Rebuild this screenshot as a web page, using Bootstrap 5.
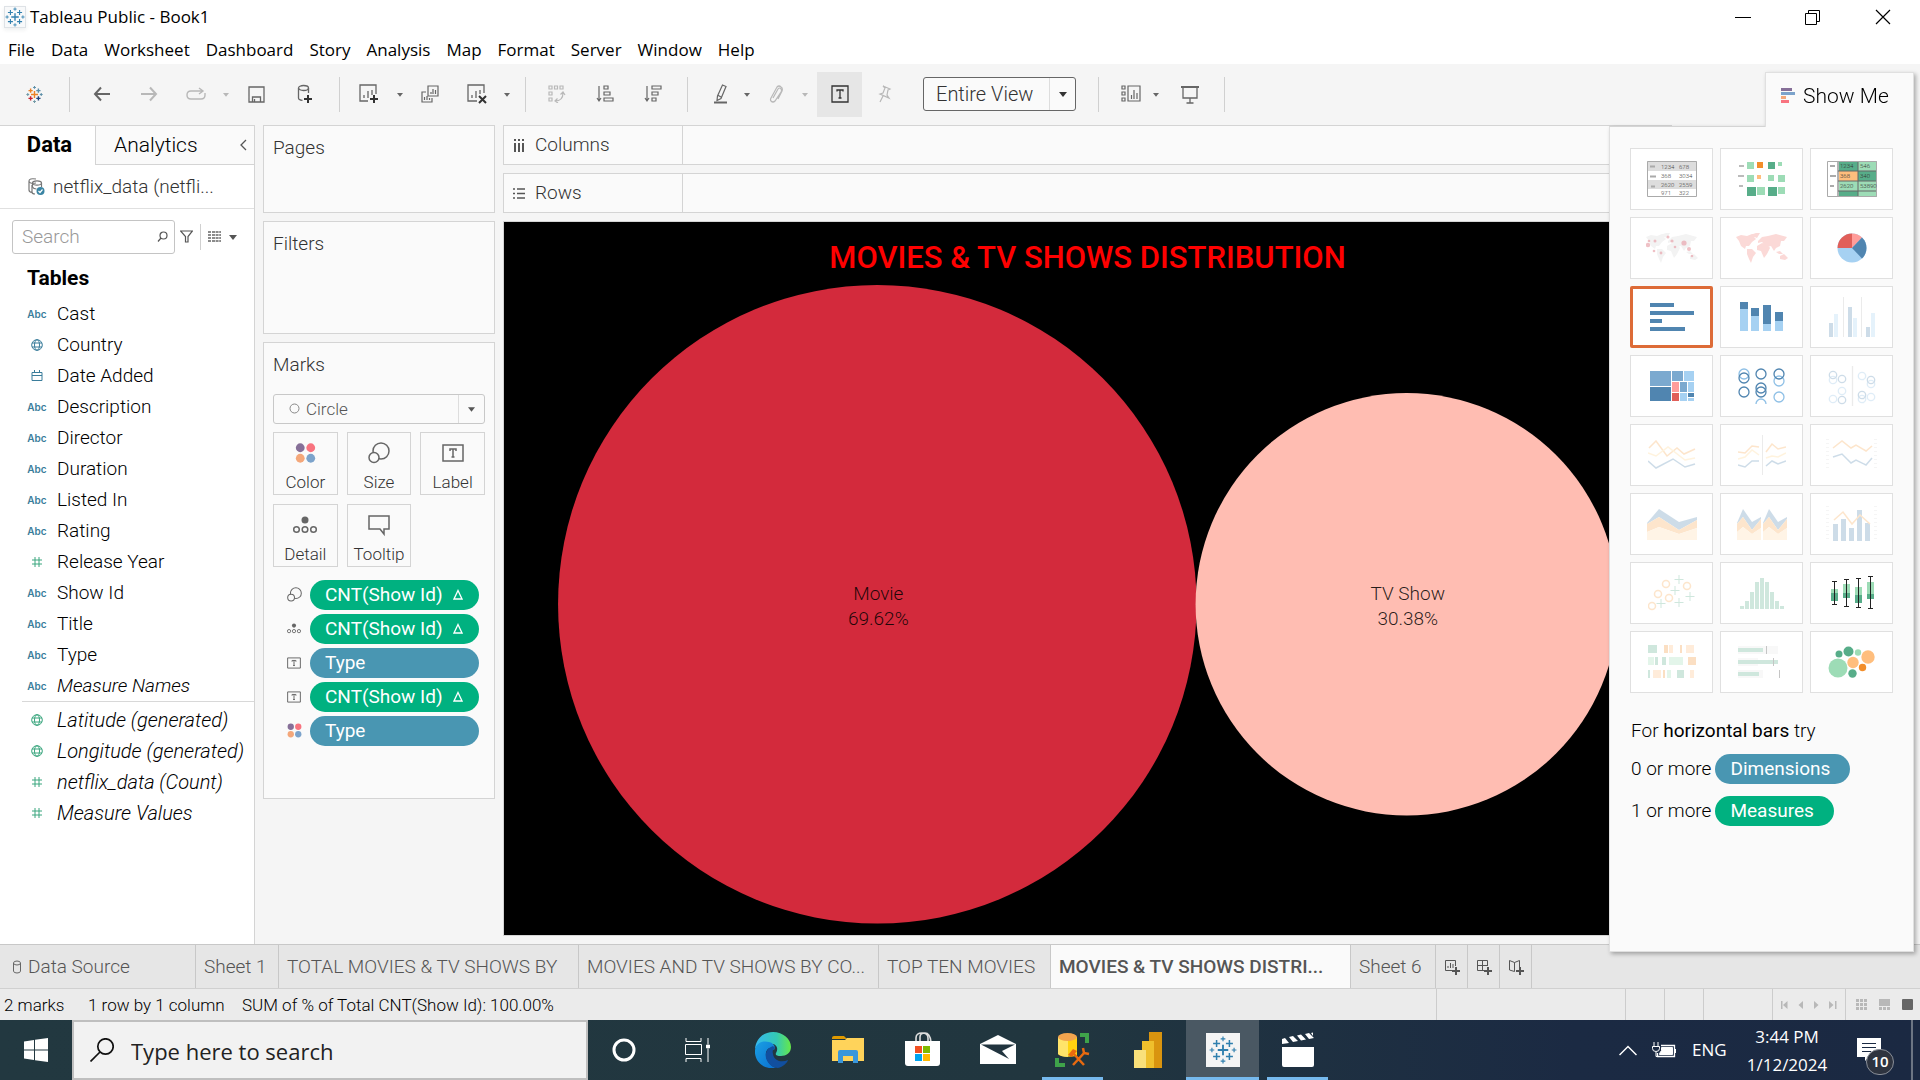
<!DOCTYPE html>
<html lang="en">
<head>
<meta charset="utf-8">
<meta name="viewport" content="width=device-width, initial-scale=1">
<title>Tableau Public - Book1</title>
<link rel="stylesheet" href="https://cdn.jsdelivr.net/npm/bootstrap@5.3.0/dist/css/bootstrap.min.css">
<style>
:root{--line:#d4d4d4;--ink:#333;--pane:#fafafa;--blue:#4996b2;--green:#00b180}
body{font-family:Roboto,"Liberation Sans",sans-serif;font-size:19px;font-weight:300;line-height:24px;color:#000;background:#f5f5f5;overflow:hidden}
svg{display:block;flex:none}
button{font:inherit;color:inherit;background:none;border:0;padding:0}
.win-ui{font-family:"Open Sans","Noto Sans",sans-serif;font-weight:400;font-size:17px}
.app-title{height:35px;padding-right:2px;padding-bottom:1px}
.app-title .wbtn{width:70px;height:34px}
.app-menu{height:29px;gap:16px;padding-left:8px;padding-top:1px}
.app-menu a{color:#000;text-decoration:none}
.tools{height:61px;color:#666}
.tool{height:45px;display:flex;align-items:center;justify-content:center}
.tool.off{color:#b8b8b8}
.tool.on{background:#e6e6e6;color:#333}
.vsep{width:1px;height:35px;background:#d0d0d0}
.drop-box{border:1px solid #666;border-radius:3px;background:var(--pane)}
.drop-box select{appearance:none;border:0;background:none;color:inherit;font:inherit;outline:0;padding:0;height:28px}
.drop-box .arrow{border-left:1px solid #ddd;align-self:stretch;display:flex;align-items:center;justify-content:center}
.side{width:255px;background:#fff;border-right:1px solid var(--line);border-top:1px solid var(--line)}
.side-tabs{height:39px;font-size:21px}
.tab-data{width:95px;font-size:22px;font-weight:700;padding-left:4px}
.tab-ana{background:var(--pane);border-left:1px solid var(--line);border-bottom:1px solid var(--line);padding:0 7px 0 18px}
.src{height:44px;border-bottom:1px solid #e0e0e0;color:var(--ink);padding-top:1px}
.find{width:163px;height:34px;border:1px solid #c4c4c4;border-radius:3px}
.find input{border:0;outline:0;width:110px;height:30px;font:inherit;padding:0;background:none}
.find input::placeholder{color:#999;opacity:1}
.fields{list-style:none;margin:0;padding:0}
.fields li{height:31px;display:flex;align-items:center;padding:1px 0 0 28px;gap:11px;white-space:nowrap}
.fields li>:first-child{width:18px;display:flex;justify-content:center;color:#3a7d9b;flex:none}
.fields .abc{font-size:10px;font-weight:600;font-family:Inter,sans-serif}
.fields .grn>:first-child{color:#3aa67e}
.fields .gen{font-style:italic}
.fields-gen{font-size:20px}
.gen-sep{margin:0 0 2px 22px;height:1px;background:#d8d8d8}
.mid{width:232px}
.pane{background:var(--pane);border:1px solid var(--line);color:var(--ink)}
.pane-pad{padding:10px 9px 9px}
.mk{height:63px;border:1px solid var(--line);font-size:17px;color:#333;display:flex;flex-direction:column;align-items:center;justify-content:space-between;padding:8px 0 0}
.mk svg{color:#666}
.mk-grid{display:grid;grid-template-columns:repeat(3,1fr);gap:9px}
.pill{display:inline-flex;align-items:center;height:30px;border-radius:15px;color:#fff;font-weight:400;padding:0 16px 0 15px}
.pill.dim{background:var(--blue)}.pill.mea{background:var(--green)}
.pill-row{display:grid;grid-template-columns:26px 169px;gap:3px;margin-bottom:4px;align-items:center;color:#666}
.pill-row>svg{margin:auto}
.work{padding-right:248px}
.shelf{height:40px}
.shelf-name{width:179px;border-right:1px solid var(--line);padding:1px 0 0 9px;gap:10px}
.view{background:#000;border:1px solid var(--line)}
.view h1{color:#f00;font-size:31px;line-height:36px;font-weight:500;margin:0;padding:18px 0 9px;text-align:center}
.show-me{position:absolute;right:6px;top:72px;width:305px;filter:drop-shadow(2px 2px 2px rgba(0,0,0,.3))}
.sm-tab{width:149px;height:55px;font-size:21px;background:var(--pane);border:1px solid #e0e0e0;border-bottom:0;position:relative;z-index:1;margin-bottom:-1px}
.sm-body{background:var(--pane);border:1px solid #e0e0e0;border-top-color:#d4d4d4;padding:21px 0 125px 20px}
.sm-grid{display:grid;grid-template-columns:repeat(3,83px);gap:7px}
.sm-grid button{height:62px;background:#fff;border:1px solid #e0e0e0;display:flex;align-items:center;justify-content:center}
.sm-grid button.sel{border:3px solid #dd6b37;border-radius:2px}
.sm-hint{padding:26px 0 0 1px}
.sm-hint .pill{padding-right:20px}
.faint{opacity:.28}
.sheets{height:45px;background:#e6e6e6;border-top:1px solid #c8c8c8;border-bottom:1px solid #d0d0d0;color:#555}
.sheets button{border-right:1px solid #c8c8c8;text-align:left;padding-left:8px;white-space:nowrap;height:100%}
.sheets button.cur{background:#fafafa;font-weight:500}
.sheets button.add{width:32px;padding:0 0 0 8px}
.w300{width:300px}
.stat{height:31px;background:#ebebeb;font-size:17px}
.stat .cell{border-left:1px solid #ccc;height:100%;display:flex;align-items:center}
.taskbar{height:60px;background:linear-gradient(90deg,#223840,#21363f 55%,#1b2a43 82%,#1b2942);color:#fff}
.tb-search{width:516px;height:60px;background:#f2f2f2;border:2px solid #bfbfbf;color:#222}
.tb-search input{border:0;outline:0;background:none;font-size:22px;height:34px;padding:2px 0 0;color:#222}
.tb-search input::placeholder{color:#222;opacity:1}
.task{width:75px;height:60px;display:flex;align-items:center;justify-content:center}
.task.run{width:61px;margin:0 7px;border-bottom:3px solid #76b9ed;padding-top:3px}
.task.act{width:73px;margin:0 1px;background:#4a5863;border-bottom:3px solid #76b9ed;padding-top:3px}
.note-count{position:absolute;left:9px;top:11px;width:28px;height:26px;border-radius:14px;background:#2e3440;border:1px solid #8a8f98;font-size:15px;font-weight:600;line-height:23px;text-align:center}
</style>
<script src="https://cdn.jsdelivr.net/npm/bootstrap@5.3.0/dist/js/bootstrap.bundle.min.js"></script>
</head>
<body class="d-flex flex-column vh-100">
<svg width="0" height="0" class="position-absolute" aria-hidden="true">
  <symbol id="i-tab" viewBox="0 0 24 24"><path d="M12 7.500v9M7.500 12h9" stroke-width="1.600"/><path d="M6.500 3.500v6M3.500 6.500h6M17.500 3.500v6M14.500 6.500h6M6.500 14.500v6M3.500 17.500h6M17.500 14.500v6M14.500 17.500h6" stroke-width="1.300"/><path d="M12 .5v4M10 2.500h4M12 19.500v4M10 21.500h4M2.500 10v4M.5 12h4M21.500 10v4M19.500 12h4" stroke-width="1"/></symbol>
  <symbol id="i-car" viewBox="0 0 8 6"><path d="M0 1h8L4 6z" fill="currentColor"/></symbol>
  <symbol id="i-globe" viewBox="0 0 12 12"><g fill="none" stroke="currentColor"><circle cx="6" cy="6" r="5.300"/><ellipse cx="6" cy="6" rx="2.500" ry="5.300"/><path d="M1 4h10M1 8h10"/></g></symbol>
  <symbol id="i-hash" viewBox="0 0 12 12"><path d="M4 1v10M8 1v10M1 4h10M1 8h10" stroke="currentColor" fill="none"/></symbol>
  <symbol id="i-size" viewBox="0 0 22 22"><g fill="none" stroke="currentColor" stroke-width="1.500"><circle cx="13" cy="9" r="8"/><circle cx="6" cy="15.500" r="5" fill="#fafafa"/></g></symbol>
  <symbol id="i-det" viewBox="0 0 24 18"><circle cx="12" cy="4" r="3.500" fill="currentColor"/><g fill="none" stroke="currentColor" stroke-width="1.500"><circle cx="3.500" cy="13.500" r="2.800"/><circle cx="12" cy="13.500" r="2.800"/><circle cx="20.500" cy="13.500" r="2.800"/></g></symbol>
  <symbol id="i-t" viewBox="0 0 22 18"><g fill="none" stroke="currentColor" stroke-width="1.500"><path d="M1 1h20v16H1zM8 7V5h6v2M11 5v8M9.500 13h3"/></g></symbol>
  <symbol id="i-col" viewBox="0 0 20 20"><circle cx="5" cy="5" r="4.200" fill="#866f98"/><circle cx="15" cy="5" r="4.200" fill="#f8737f"/><circle cx="5" cy="15" r="4.200" fill="#f4a77a"/><circle cx="15" cy="15" r="4.200" fill="#7ca3cb"/></symbol>
  <symbol id="i-tri" viewBox="0 0 10 11"><path d="M5 1.500L9 10H1z" fill="none" stroke="currentColor" stroke-width="1.300"/></symbol>
  <symbol id="i-world" viewBox="0 0 52 30"><path d="M0 4l5-2 6 1 5-2 5 0-3 3 2 2-4 3-3 4-3 0-1 3-4-3-2-5zM14 2l6-2h4l-3 5zM11 16l5 0 4 4-3 4-2 6-2-4-2-5zM21 13l5-3 6 2 2 3-3 6-3 4-3-7-4-1zM22 8l4-4 6-1 8-2 11 3-3 4-3 0-1 5-4 2-2 3-3-5-4 1-5-5-4 1zM40 19l4-1 3 3-4 0zM44 23l4-2 4 4-3 2-5-1z"/></symbol>
</svg>

<header class="bg-white win-ui">
  <div class="app-title d-flex align-items-center">
    <span class="d-flex ms-1 me-1 border shadow-sm bg-light"><svg width="20" height="20" stroke="#2f7fae"><use href="#i-tab"/></svg></span>
    <span class="flex-grow-1">Tableau Public - Book1</span>
    <button class="wbtn" aria-label="Minimize"><svg class="mx-auto" width="16" height="16"><path d="M0 8.500h16" stroke="#000"/></svg></button>
    <button class="wbtn" aria-label="Restore"><svg class="mx-auto" width="16" height="16" fill="none" stroke="#000"><path d="M.5 4.500h11v11H.5zM3.500 4V1.500h11v11H12"/></svg></button>
    <button class="wbtn" aria-label="Close"><svg class="mx-auto" width="16" height="16"><path d="M1 1l14 14M15 1L1 15" stroke="#000" stroke-width="1.200"/></svg></button>
  </div>
  <nav class="app-menu d-flex align-items-center" aria-label="Menu">
    <a href="#">File</a><a href="#">Data</a><a href="#">Worksheet</a><a href="#">Dashboard</a><a href="#">Story</a><a href="#">Analysis</a><a href="#">Map</a><a href="#">Format</a><a href="#">Server</a><a href="#">Window</a><a href="#">Help</a>
  </nav>
</header>

<div class="tools d-flex align-items-center" role="toolbar" aria-label="Toolbar">
  <button class="tool" style="width:69px" aria-label="Start page"><svg width="17" height="17" viewBox="0 0 24 24" fill="none" stroke-width="2"><path d="M12 7v10M7 12h10" stroke="#eb8226"/><path d="M6.500 3.500v6M3.500 6.500h6" stroke="#eb8226"/><path d="M17.500 3.500v6M14.500 6.500h6" stroke="#5c8fa8"/><path d="M6.500 14.500v6M3.500 17.500h6" stroke="#c8202d"/><path d="M17.500 14.500v6M14.500 17.500h6" stroke="#1f447e"/><path d="M12 0v4M10 2h4M21.500 10v4M19.500 12h4" stroke="#5c8fa8" stroke-width="1.500"/><path d="M12 20v4M10 22h4M2.500 10v4M.5 12h4" stroke="#7199a6" stroke-width="1.500"/></svg></button>
  <span class="vsep"></span>
  <button class="tool" style="width:64px" aria-label="Undo"><svg width="18" height="16" fill="none" stroke="currentColor" stroke-width="2"><path d="M17 8H2M8 1.500L2 8l6 6.500"/></svg></button>
  <button class="tool off" style="width:32px" aria-label="Redo"><svg width="18" height="16" fill="none" stroke="currentColor" stroke-width="2"><path d="M0 8h15M9 1.500L15 8l-6 6.500"/></svg></button>
  <button class="tool off" style="width:60px" aria-label="Replay"><svg width="20" height="14" fill="none" stroke="currentColor" stroke-width="1.400"><path d="M16 4H5Q1 4 1 8t4 4h10q4 0 4-4V6M13 1l4 3-4 3"/></svg></button>
  <span class="tool off" style="width:0"><svg width="6" height="5"><use href="#i-car"/></svg></span>
  <button class="tool" style="width:60px" aria-label="Save"><svg width="17" height="17" fill="none" stroke="currentColor" stroke-width="1.300"><path d="M1 1h15v15H1zM4.500 16v-5h8v5M6.500 13v3"/></svg></button>
  <button class="tool" style="width:38px" aria-label="New data source"><svg width="16" height="20" fill="none" stroke="currentColor" stroke-width="1.300"><ellipse cx="6.500" cy="4" rx="5" ry="2.500"/><path d="M1.500 4v10q0 2 4 2.300M11.500 4v5"/><path d="M11 11v8M7 15h8" stroke="#333" stroke-width="2"/></svg></button>
  <span class="vsep" style="margin-left:15px"></span>
  <button class="tool" style="width:57px" aria-label="New worksheet"><svg width="20" height="20" fill="none" stroke="currentColor" stroke-width="1.300"><path d="M9 17H1V1h16v9M5 14v-3M9 14V7M13 11v-5"/><path d="M15 11v8M11 15h8" stroke="#333" stroke-width="2"/></svg></button>
  <svg width="6" height="5"><use href="#i-car"/></svg>
  <button class="tool" style="width:54px" aria-label="Duplicate"><svg width="18" height="18" fill="none" stroke="currentColor" stroke-width="1.200"><path d="M7 1h10v10H7zM5 7H1v10h10v-4M10 9V7M12 9V4M14.500 9V5M3.500 15v-3M6 15v-4M8.500 15v-2"/></svg></button>
  <button class="tool" style="width:40px" aria-label="Clear"><svg width="20" height="20" fill="none" stroke="currentColor" stroke-width="1.300"><path d="M10 17H1V1h16v8M5 14v-3M9 14V7M13 10V6"/><path d="M12 12l7 7M19 12l-7 7" stroke="#333" stroke-width="2"/></svg></button>
  <span class="tool" style="width:6px;margin-left:7px"><svg width="6" height="5"><use href="#i-car"/></svg></span>
  <span class="vsep" style="margin-left:15px"></span>
  <button class="tool off" style="width:62px" aria-label="Swap"><svg width="18" height="18" fill="none" stroke="currentColor" stroke-width="1.200"><path d="M1 1h3v3H1zM6.500 1h3v3h-3zM12 1h3v3h-3zM1 7h3v3H1zM1 13h3v3H1zM7 16q8 0 8-8M12.500 9.500L15 7l2 3M9.500 13.500L7 16l3 2"/></svg></button>
  <button class="tool" style="width:34px" aria-label="Sort ascending"><svg width="18" height="18" fill="none" stroke="currentColor" stroke-width="1.200"><path d="M3 1v15M1 13l2 3 2-3M8 1h4v3H8zM8 7h6v3H8zM8 13h9v3H8z"/></svg></button>
  <button class="tool" style="width:62px" aria-label="Sort descending"><svg width="18" height="18" fill="none" stroke="currentColor" stroke-width="1.200"><path d="M3 1v15M1 13l2 3 2-3M8 1h9v3H8zM8 7h6v3H8zM8 13h4v3H8z"/></svg></button>
  <span class="vsep" style="margin-left:3px"></span>
  <button class="tool" style="width:52px;margin-left:7px" aria-label="Highlight"><svg width="14" height="20" fill="none" stroke="currentColor" stroke-width="1.200"><path d="M8.500 1l3.500 1.500-5 12-4 2 .5-4.500zM3.500 11l3.500 2"/><path d="M0 18.500h13" stroke-width="2"/></svg></button>
  <span class="tool" style="width:0"><svg width="6" height="5"><use href="#i-car"/></svg></span>
  <button class="tool off" style="width:58px" aria-label="Group"><svg width="15" height="19" fill="none" stroke="currentColor" stroke-width="1.200"><path d="M4 13l5-9q1.500-2 3 0 1 1 0 3l-6 9q-2 2-4 0-1-1 0-3L8 2q2-2 4 0 2 1 1 4l-4 8"/></svg></button>
  <span class="tool off" style="width:0"><svg width="6" height="5"><use href="#i-car"/></svg></span>
  <button class="tool on" style="width:45px;margin-left:12px" aria-label="Show mark labels"><svg width="18" height="18" fill="none" stroke="currentColor" stroke-width="1.300"><path d="M1 1h16v16H1zM6 6.500V5h6v1.500M9 5v8M7.500 13h3"/></svg></button>
  <button class="tool off" style="width:44px" aria-label="Fix axes"><svg width="15" height="18" fill="none" stroke="currentColor" stroke-width="1.200"><path d="M6 1l7 3-2 1-1 5 2 3-9-4 3-1 2-5zM6 11l-3 6"/></svg></button>
  <div class="drop-box d-flex align-items-center" style="width:153px;height:34px;margin-left:17px;font-size:20px;color:#333">
    <select aria-label="Fit" class="flex-grow-1 ps-2 ms-1"><option>Entire View</option></select>
    <span class="arrow" style="width:26px"><svg width="8" height="6"><use href="#i-car"/></svg></span>
  </div>
  <span class="vsep" style="margin-left:22px"></span>
  <button class="tool" style="width:50px;margin-left:7px" aria-label="Show cards"><svg width="20" height="18" fill="none" stroke="currentColor" stroke-width="1.200"><path d="M1 1h3v3H1zM1 7h3v3H1zM1 13h3v3H1zM7 1h12v15H7zM10.500 14v-4M13 14V5M16 14V8"/></svg></button>
  <span class="tool" style="width:0"><svg width="6" height="5"><use href="#i-car"/></svg></span>
  <button class="tool" style="width:68px" aria-label="Presentation"><svg width="18" height="19" fill="none" stroke="currentColor" stroke-width="1.300"><path d="M2 3v10h14V3M9 13v5M5.500 18h7"/><path d="M0 2h18" stroke-width="2"/></svg></button>
  <span class="vsep"></span>
</div>

<main class="d-flex flex-grow-1" style="min-height:0">
  <aside class="side d-flex flex-column flex-shrink-0">
    <div class="side-tabs d-flex">
      <button class="tab-data flex-shrink-0">Data</button>
      <button class="tab-ana d-flex flex-grow-1 align-items-center justify-content-between">Analytics<svg width="7" height="12" fill="none" stroke="#555" stroke-width="1.300"><path d="M6 1L1 6l5 5"/></svg></button>
    </div>
    <div class="src d-flex align-items-center ps-4" style="gap:8px"><svg class="ms-1" width="17" height="18" fill="none" stroke="#777" stroke-width="1.200"><path d="M1 3v9q0 2 3 2.500M8 1Q1 0 1 3t7 2M4 7v7q0 2 3 2"/><ellipse cx="9" cy="5" rx="4.500" ry="2.200"/><path d="M4.500 5v4q1 2 4 2M13.500 5v4"/><circle cx="12.500" cy="13" r="4" fill="#3a84a3" stroke="none"/><path d="M10.500 13l1.500 1.500 2.500-3" stroke="#fff"/></svg>netflix_data (netfli...</div>
    <div class="d-flex align-items-center" style="padding:11px 0 0 12px">
      <div class="find d-flex align-items-center justify-content-between" style="padding:0 6px 0 9px">
        <input aria-label="Search fields" placeholder="Search">
        <svg width="11" height="11" fill="none" stroke="#555" stroke-width="1.200"><circle cx="6.500" cy="4.500" r="3.500"/><path d="M4 7L1 10.500"/></svg>
      </div>
      <svg width="13" height="13" style="margin:0 7px 0 5px" fill="none" stroke="#555" stroke-width="1.200"><path d="M.5 1h12L8 6.500V12H5.500V6.500z"/></svg>
      <span class="vsep" style="height:26px;margin-right:7px"></span>
      <svg width="13" height="11" stroke="#666" stroke-width="1.500"><path d="M0 1h3M4 1h9M0 4h3M4 4h9M0 7h3M4 7h9M0 10h3M4 10h9" stroke-dasharray="3 .6"/></svg>
      <svg width="8" height="6" class="ms-2" color="#555"><use href="#i-car"/></svg>
    </div>
    <h2 class="m-0" style="font-size:21px;font-weight:700;line-height:24px;padding:12px 0 8px 27px">Tables</h2>
    <ul class="fields">
      <li><span class="abc">Abc</span>Cast</li>
      <li><span><svg width="12" height="12"><use href="#i-globe"/></svg></span>Country</li>
      <li><span><svg width="12" height="12" fill="none" stroke="currentColor"><path d="M1 2.500h10v8H1zM1 5.500h10M3.500 0v3M8.500 0v3"/></svg></span>Date Added</li>
      <li><span class="abc">Abc</span>Description</li>
      <li><span class="abc">Abc</span>Director</li>
      <li><span class="abc">Abc</span>Duration</li>
      <li><span class="abc">Abc</span>Listed In</li>
      <li><span class="abc">Abc</span>Rating</li>
      <li class="grn"><span><svg width="12" height="12"><use href="#i-hash"/></svg></span>Release Year</li>
      <li><span class="abc">Abc</span>Show Id</li>
      <li><span class="abc">Abc</span>Title</li>
      <li><span class="abc">Abc</span>Type</li>
      <li class="gen"><span class="abc fst-normal">Abc</span>Measure Names</li>
    </ul>
    <div class="gen-sep"></div>
    <ul class="fields fields-gen">
      <li class="gen grn"><span><svg width="12" height="12"><use href="#i-globe"/></svg></span>Latitude (generated)</li>
      <li class="gen grn"><span><svg width="12" height="12"><use href="#i-globe"/></svg></span>Longitude (generated)</li>
      <li class="gen grn"><span><svg width="12" height="12"><use href="#i-hash"/></svg></span>netflix_data (Count)</li>
      <li class="gen grn"><span><svg width="12" height="12"><use href="#i-hash"/></svg></span>Measure Values</li>
    </ul>
  </aside>

  <section class="mid d-flex flex-column gap-2 flex-shrink-0 mx-2">
    <div class="pane pane-pad" style="height:88px">Pages</div>
    <div class="pane pane-pad" style="height:113px">Filters</div>
    <div class="pane pane-pad" style="height:457px">
      <div style="margin-bottom:17px">Marks</div>
      <div class="drop-box d-flex align-items-center" style="height:30px;font-size:17px;border-color:#c8c8c8;color:#555;margin-bottom:8px;padding-left:15px;gap:6px">
        <svg width="11" height="11"><circle cx="5.500" cy="5.500" r="4.500" fill="none" stroke="#888"/></svg>
        <select aria-label="Mark type" class="flex-grow-1" style="height:26px"><option>Circle</option></select>
        <span class="arrow" style="width:26px"><svg width="7" height="6"><use href="#i-car"/></svg></span>
      </div>
      <div class="mk-grid">
        <button class="mk"><svg width="21" height="24"><use href="#i-col"/></svg>Color</button>
        <button class="mk"><svg width="22" height="24"><use href="#i-size"/></svg>Size</button>
        <button class="mk"><svg width="22" height="24"><use href="#i-t"/></svg>Label</button>
        <button class="mk"><svg width="24" height="24"><use href="#i-det"/></svg>Detail</button>
        <button class="mk"><svg width="22" height="24" fill="none" stroke="currentColor" stroke-width="1.500"><path d="M1 3h20v13h-5v5l-4-5H1z"/></svg>Tooltip</button>
      </div>
      <div style="padding:13px 0 0 8px">
        <div class="pill-row"><svg width="15" height="15"><use href="#i-size"/></svg><span class="pill mea justify-content-between">CNT(Show Id)<svg width="10" height="11"><use href="#i-tri"/></svg></span></div>
        <div class="pill-row"><svg width="14" height="11"><use href="#i-det"/></svg><span class="pill mea justify-content-between">CNT(Show Id)<svg width="10" height="11"><use href="#i-tri"/></svg></span></div>
        <div class="pill-row"><svg width="14" height="12"><use href="#i-t"/></svg><span class="pill dim">Type</span></div>
        <div class="pill-row"><svg width="14" height="12"><use href="#i-t"/></svg><span class="pill mea justify-content-between">CNT(Show Id)<svg width="10" height="11"><use href="#i-tri"/></svg></span></div>
        <div class="pill-row"><svg width="15" height="15"><use href="#i-col"/></svg><span class="pill dim">Type</span></div>
      </div>
    </div>
  </section>

  <section class="work d-flex flex-column flex-grow-1 gap-2 pb-2">
    <div class="pane shelf d-flex"><div class="shelf-name d-flex align-items-center"><svg width="12" height="13" stroke="#555" stroke-width="2"><path d="M2 0v2M2 4v9M6 0v2M6 4v9M10 0v2M10 4v9"/></svg>Columns</div></div>
    <div class="pane shelf d-flex"><div class="shelf-name d-flex align-items-center"><svg width="12" height="11" stroke="#555" stroke-width="1.600"><path d="M0 1h2M4 1h8M0 5.500h2M4 5.500h8M0 10h2M4 10h8"/></svg>Rows</div></div>
    <div class="view flex-grow-1 d-flex flex-column" style="min-height:0">
      <h1>MOVIES &amp; TV SHOWS DISTRIBUTION</h1>
      <svg class="flex-grow-1" viewBox="0 0 1166 650" width="100%" preserveAspectRatio="xMidYMin meet" style="min-height:0" role="img" aria-label="Packed bubbles: Movie 69.62%, TV Show 30.38%">
        <circle cx="373" cy="319" r="319" fill="#d32a3c"/><circle cx="902" cy="319" r="211" fill="#ffbdb2"/>
        <g font-size="19" font-family="Roboto" font-weight="300" text-anchor="middle" fill="#000" fill-opacity=".85"><text x="374" y="315">Movie</text><text x="374" y="340">69.62%</text><text x="903" y="315">TV Show</text><text x="903" y="340">30.38%</text></g>
      </svg>
    </div>
  </section>
</main>

<nav class="sheets d-flex flex-shrink-0" aria-label="Sheets">
  <button class="d-flex align-items-center" style="width:196px;padding-left:12px;gap:6px"><svg width="10" height="14" fill="none" stroke="#666"><path d="M1.500 3q0-2 3.500-2t3.500 2v8q0 2-3.500 2t-3.500-2zM1.500 3q0 2 3.500 2t3.500-2"/></svg>Data Source</button>
  <button style="width:83px">Sheet 1</button>
  <button class="w300">TOTAL MOVIES &amp; TV SHOWS BY</button>
  <button class="w300">MOVIES AND TV SHOWS BY CO...</button>
  <button style="width:172px">TOP TEN MOVIES</button>
  <button class="w300 cur">MOVIES &amp; TV SHOWS DISTRI...</button>
  <button style="width:85px">Sheet 6</button>
  <button class="add" aria-label="New worksheet"><svg width="17" height="16" fill="none" stroke="currentColor"><path d="M8 11.500H1.500V1.500h10V7M4 9V7M6.500 9V4M9 9V5"/><path d="M12 8v8M8 12h8" stroke-width="2"/></svg></button>
  <button class="add" aria-label="New dashboard"><svg width="17" height="16" fill="none" stroke="currentColor"><path d="M8 11.500H1.500V1.500h10V7M6.500 1.500v10M1.500 6.500h10"/><path d="M12 8v8M8 12h8" stroke-width="2"/></svg></button>
  <button class="add" aria-label="New story"><svg width="17" height="16" fill="none" stroke="currentColor"><path d="M6.500 12.500L1.500 11V1.500l5 2 5-2V8M6.500 3.500v9"/><path d="M12 8v8M8 12h8" stroke-width="2"/></svg></button>
</nav>
<div class="stat d-flex align-items-center flex-shrink-0">
  <span class="ps-1" style="width:88px">2 marks</span><span style="width:154px">1 row by 1 column</span><span class="flex-grow-1">SUM of % of Total CNT(Show Id): 100.00%</span>
  <span class="cell" style="width:189px"></span><span class="cell" style="width:39px"></span><span class="cell" style="width:39px"></span><span class="cell" style="width:69px"></span>
  <span class="cell justify-content-center" style="width:73px"><svg width="56" height="8" fill="#b8b8b8"><path d="M0 0h1.500v8H0zM6.500 0v8L2 4zM22 0v8l-4.500-4zM33 0v8l4.500-4zM48 0v8l4.500-4zM54 0h1.500v8H54z"/></svg></span>
  <span class="cell" style="width:75px;padding-left:10px"><svg width="58" height="12" fill="#b8b8b8"><path d="M0 0h3v3H0zM4 0h3v3H4zM8 0h3v3H8zM0 4h3v3H0zM4 4h3v3H4zM8 4h3v3H8zM0 8h3v3H0zM4 8h3v3H4zM8 8h3v3H8zM23 0h11v7H23zM23 8h3v3h-3zM27 8h3v3h-3zM31 8h3v3h-3z"/><rect x="46" width="11" height="11" rx="1" fill="#666"/></svg></span>
</div>

<footer class="taskbar win-ui d-flex align-items-center flex-shrink-0">
  <button class="task" style="width:72px" aria-label="Start"><svg width="24" height="24" fill="#fff"><path d="M0 3.500L10 2v9.500H0zM11 1.800L24 0v11.500H11zM0 12.500h10V22L0 20.500zM11 12.500h13V24l-13-1.800z"/></svg></button>
  <div class="tb-search d-flex align-items-center" style="padding-left:16px;gap:17px"><svg width="24" height="24" fill="none" stroke="#111" stroke-width="1.700"><circle cx="15.500" cy="8.500" r="7.700"/><path d="M10 14L.5 23.500"/></svg><input aria-label="Search Windows" class="flex-grow-1" placeholder="Type here to search"></div>
  <button class="task" style="width:72px" aria-label="Cortana"><svg width="24" height="24"><circle cx="12" cy="12" r="10" fill="none" stroke="#fff" stroke-width="3"/></svg></button>
  <button class="task" aria-label="Task view"><svg width="25" height="24" fill="none" stroke="#fff"><path d="M1 0v3.500h15V0M.5 6.500h16v10H.5zM1 24v-3.500h15V24M23 0v6M23 11v13"/><path d="M21.500 7h3v3h-3z" fill="#fff"/></svg></button>
  <button class="task" aria-label="Edge"><svg width="36" height="36" viewBox="0 0 36 36"><defs><linearGradient id="eg" x2="1"><stop stop-color="#36b8f0"/><stop offset=".6" stop-color="#34c9b4"/><stop offset="1" stop-color="#66e848"/></linearGradient><linearGradient id="eb" y2="1"><stop stop-color="#1aa0e4"/><stop offset="1" stop-color="#0a6fd0"/></linearGradient></defs><path d="M0 17C1 6 9 0 18 0c10 0 18 7 18 15 0 6-5 9-10 9-4 0-6-1-5-3 3-5 0-9-4-9C8 9 2 13 0 17z" fill="url(#eg)"/><path d="M0 18C1 11 8 8 14 10c5 1 7 5 5 8-5-5-9 1-8 6 1 6 5 10 10 12C8 38-1 29 0 18z" fill="url(#eb)"/><path d="M18 14c-6 2-8 7-7 12 2 7 8 10 12 10 5-1 9-5 10-8-6 3-14 1-15-6-1-3 0-5 2-6z" fill="#114f9f"/></svg></button>
  <button class="task" aria-label="File Explorer"><svg width="32" height="28"><path d="M0 2q0-2 2-2h10l3 3H0z" fill="#e09a00"/><path d="M0 4h13l2-2h17v23H0z" fill="#ffd35a"/><path d="M6 27V16q0-2 2-2h16q2 0 2 2v11h-5v-7H11v7z" fill="#3a97dc"/></svg></button>
  <button class="task" aria-label="Store"><svg width="35" height="36"><path d="M11 10V6q0-5 6-5t6 5v4M15 10V5q0-4 5-4t6 9" fill="none" stroke="#ddd" stroke-width="1.600"/><path d="M0 9h35v22q0 3-3 3H3q-3 0-3-3z" fill="#fff"/><path d="M10 14h7v7h-7z" fill="#f25022"/><path d="M18 14h7v7h-7z" fill="#7fba00"/><path d="M10 22h7v7h-7z" fill="#00a4ef"/><path d="M18 22h7v7h-7z" fill="#ffb900"/></svg></button>
  <button class="task" aria-label="Mail"><svg width="36" height="30"><path d="M0 9L18 0l18 9v20H0z" fill="#fff"/><path d="M1 9.500h34L22 16l7 8L2 10z" fill="#21343f"/></svg></button>
  <button class="task run" aria-label="SQL tools"><svg width="35" height="36"><path d="M3 5v17q4 4 19 2V5z" fill="#ffd30f"/><path d="M3 5v17q3 3 10 3V5z" fill="#ffe46a"/><ellipse cx="12.500" cy="5" rx="9.500" ry="4" fill="#f2a44e"/><path d="M25 3h7v8M2 26v7h8" fill="none" stroke="#3fa34a" stroke-width="4"/><path d="M18 21l11 12M30 20L18 33" stroke="#e86a10" stroke-width="2.500"/><path d="M13 23l5-6 4 2-5 6z" fill="#e86a10"/><path d="M28 16l1 5 5 1" stroke="#e86a10" fill="none" stroke-width="2.500"/></svg></button>
  <button class="task" aria-label="Power BI"><svg width="28" height="36"><path d="M15 0h13v36H15z" fill="#d9940f"/><path d="M8 9h12v27H8z" fill="#efbf2c"/><path d="M0 18h12v18H0z" fill="#f9e07a"/></svg></button>
  <button class="task act" aria-label="Tableau"><svg width="34" height="34"><path d="M0 0h34v34H0z" fill="#f4f4f4"/><svg x="3" y="3" width="28" height="28" stroke="#2f7fae"><use href="#i-tab"/></svg></svg></button>
  <button class="task run" aria-label="Movies"><svg width="32" height="36" fill="#fff"><path d="M0 15h32v18q0 2-2 2H2q-2 0-2-2zM0 7l3-1 4 5-7 1zM7 5l4-1 5 5-5 1zM15 3.500l4-1 5 5-5 1zM23 2l4-1 5 5-5 1zM29 1l2-.5V4z"/></svg></button>
  <div class="ms-auto d-flex align-items-center">
    <svg width="18" height="11" fill="none" stroke="#fff" stroke-width="1.500"><path d="M.5 10L9 1.500 17.500 10"/></svg>
    <svg width="24" height="17" style="margin:0 16px 0 15px" fill="none" stroke="#fff"><path d="M2 0v4M6 0v4M.5 4.500h7v2q0 3-3.500 3t-3.500-3zM4 10v4.500h2"/><path d="M9 3.500h13.500v11H5.500V11M23.500 7v4" stroke-width="1.300"/><path d="M9.500 5.500h11v7h-13v-1l2-3z" fill="#fff"/></svg>
    <span style="width:48px">ENG</span>
    <div class="text-center" style="width:94px;line-height:28px;padding-top:1px">3:44 PM<br>1/12/2024</div>
    <button class="position-relative" style="margin:0 17px 0 23px;width:37px" aria-label="Notifications"><svg width="24" height="24" fill="#fff"><path d="M0 0h24v19H12l-4 4v-4H0z"/><path d="M5 5.500h14M5 9.500h14M5 13.500h9" stroke="#1b2a43"/></svg><span class="note-count">10</span></button>
    <span style="width:9px;height:60px;border-left:2px solid #6c7583"></span>
  </div>
</footer>

<aside class="show-me">
  <button class="sm-tab d-flex align-items-center ms-auto" style="padding:0 0 9px 15px;gap:8px"><svg width="14" height="15"><path d="M0 0h11v3H0z" fill="#866f98"/><path d="M0 4h14v3H0z" fill="#7ca3cb"/><path d="M0 8h5v3H0z" fill="#f4a77a"/><path d="M0 12h8v3H0z" fill="#f8737f"/></svg>Show Me</button>
  <div class="sm-body">
    <div class="sm-grid">
      <button aria-label="Text table"><svg width="50" height="36"><path d="M0 0h50v10H0zM0 19h50v9H0z" fill="#ddd"/><path d="M.5.5h49v35H.5z" fill="none" stroke="#aaa"/><path d="M3 5.500h5M3 15.500h6M4 25.500h4" stroke="#aaa" stroke-width="2"/><g font-size="6" fill="#444"><text x="14" y="8">1234</text><text x="32" y="8">678</text><text x="14" y="17">368</text><text x="32" y="17">3034</text><text x="14" y="26">2620</text><text x="32" y="26">2559</text><text x="14" y="34">971</text><text x="32" y="34">322</text></g></svg></button>
      <button aria-label="Heat map"><svg width="48" height="36"><path d="M1 5h5M0 15h6M1 25h4" stroke="#bbb" stroke-width="2"/><path d="M9 1h7v7H9zM40 1h4v4h-4zM9 14h7v7H9zM30 14h6v6h-6zM40 14h7v7h-7zM19 26h8v8h-8zM40 26h7v7h-7z" fill="#9ddcb6"/><path d="M30 1h7v7h-7zM9 26h9v9H9zM30 26h9v9h-9z" fill="#57ad89"/><path d="M19 1h6v6h-6z" fill="#f28e2b"/><path d="M19 14h4v4h-4z" fill="#ffbe7d"/></svg></button>
      <button aria-label="Highlight table"><svg width="50" height="36"><path d="M12 0h38v36H12z" fill="#9ddcb6"/><path d="M12 0h19v10H12zM31 10h19v10H31zM12 30h19v6H12z" fill="#57ad89"/><path d="M12 10h19v10H12z" fill="#ffbe7d"/><path d="M11 0v36M31 0v36M11 10h39M11 20h39M11 30h39" stroke="#666"/><path d="M.5.500h49v35H.5z" fill="none" stroke="#aaa"/><path d="M3 5h5M3 15h6M3 25h4" stroke="#aaa" stroke-width="2"/><g font-size="6" fill="#333"><text x="13" y="7">1234</text><text x="33" y="7">546</text><text x="13" y="17">368</text><text x="33" y="17">340</text><text x="13" y="27">2620</text><text x="33" y="27">53890</text></g></svg></button>
      <button aria-label="Symbol map"><svg width="52" height="30"><svg width="52" height="30" fill="#f3f3f3"><use href="#i-world"/></svg><g fill="#e8a0a8" opacity=".65"><circle cx="2" cy="12" r="2.200"/><circle cx="3" cy="8" r="1.300"/><circle cx="9" cy="8" r="1.500"/><circle cx="22" cy="4" r="1.500"/><circle cx="26" cy="8" r="1.600"/><circle cx="38" cy="10" r="2.600"/><circle cx="43" cy="16" r="2"/><circle cx="8" cy="18" r="1.300"/><circle cx="15" cy="20" r="1.400"/><circle cx="29" cy="14" r="1.300"/><circle cx="46" cy="23" r="1.300"/></g></svg></button>
      <button aria-label="Filled map"><svg width="52" height="30" fill="#fbd9d7"><use href="#i-world"/></svg></button>
      <button aria-label="Pie chart"><svg width="30" height="30"><circle cx="15" cy="15" r="14.500" fill="#a6d1f2"/><path d="M15 15V.5A14.500 14.500 0 0 0 .5 15z" fill="#e15f59"/><path d="M15 15V.5A14.500 14.500 0 0 1 25 4.500z" fill="#ff9d9a"/><path d="M15 15L25 4.500a14.500 14.500 0 0 1 0 21z" fill="#5085b0"/></svg></button>
      <button class="sel" aria-label="Horizontal bars"><svg width="44" height="28" fill="#5085b0"><path d="M0 0h24v4H0zM0 8h44v4H0zM0 16h12v4H0zM0 24h35v4H0z"/></svg></button>
      <button aria-label="Stacked bars"><svg width="44" height="30"><path d="M0 7h8v22H0zM11 14h8v15h-8zM23 22h8v7h-8zM35 19h8v10h-8z" fill="#a6d1f2"/><path d="M0 0h8v7H0zM11 6h8v8h-8zM23 3h8v19h-8zM35 10h8v9h-8z" fill="#5085b0"/></svg></button>
      <button aria-label="Side-by-side bars"><svg class="faint" width="46" height="40"><path d="M0 26h4v14H0zM19 10h4v30h-4zM37 30h4v10h-4z" fill="#5085b0"/><path d="M5 17h4v23H5zM24 21h4v19h-4zM42 16h4v24h-4z" fill="#a6d1f2"/><path d="M14.500 0v40M32.500 0v40" stroke="#bbb"/></svg></button>
      <button aria-label="Treemap"><svg width="44" height="30"><path d="M0 0h21v15H0zM22 0h11v10H22zM30 11h7v10h-7z" fill="#7ba9cf"/><path d="M0 16h21v14H0zM38 22h6v4h-6z" fill="#5085b0"/><path d="M34 0h10v10H34zM38 11h6v10h-6zM30 22h7v8h-7zM38 27h6v3h-6z" fill="#a6d1f2"/><path d="M22 11h7v10h-7z" fill="#ff9d9a"/><path d="M22 22h7v8h-7z" fill="#e15f59"/></svg></button>
      <button aria-label="Circle views"><svg width="48" height="36" fill="none" stroke-width="1.300"><g stroke="#8fc0e6"><circle cx="6" cy="6" r="5"/><circle cx="41" cy="13" r="5"/><circle cx="41" cy="29" r="5"/><path d="M18 36a5 5 0 0 1 10 0"/></g><g stroke="#5085b0"><circle cx="6" cy="10" r="5"/><circle cx="6" cy="24" r="5"/><circle cx="23" cy="6" r="5"/><circle cx="23" cy="20" r="5"/><circle cx="23" cy="24" r="5"/><circle cx="41" cy="6" r="5"/></g></svg></button>
      <button aria-label="Side-by-side circles"><svg class="faint" width="48" height="40" fill="none" stroke-width="1.300"><g stroke="#8fc0e6"><circle cx="5" cy="14" r="3.700"/><circle cx="14" cy="25" r="3.700"/><circle cx="5" cy="33" r="3.700"/><circle cx="34" cy="10" r="3.700"/><circle cx="43" cy="18" r="3.700"/><circle cx="34" cy="33" r="3.700"/><circle cx="43" cy="31" r="3.700"/></g><g stroke="#5085b0"><circle cx="5" cy="9" r="3.700"/><circle cx="14" cy="13" r="3.700"/><circle cx="14" cy="34" r="3.700"/><circle cx="43" cy="14" r="3.700"/><circle cx="34" cy="29" r="3.700"/></g><path d="M24.500 0v40" stroke="#bbb"/></svg></button>
      <button aria-label="Lines"><svg class="faint" width="48" height="30" fill="none" stroke-width="1.500"><path d="M1 8l7-7 11 15 10-8 7 6 11-5" stroke="#f9a64a"/><path d="M0 13l8 3 12-9 17 13 10-2" stroke="#ffd68a"/><path d="M0 21l8 7 17-9 12 8 10-3" stroke="#5085b0"/></svg></button>
      <button aria-label="Lines with dates"><svg class="faint" width="48" height="40" fill="none" stroke-width="1.500"><path d="M0 17l7 1 7-7 7 1M28 17l6-8 6 5 8-2" stroke="#f9a64a"/><path d="M0 24l7-2 7-7 7 5M28 23l6-2 6 1 8-4" stroke="#ffd68a"/><path d="M0 30l7 2 7-6h7M28 31l6-5 6 3 8-3" stroke="#5085b0"/><path d="M24.500 0v40" stroke="#bbb" stroke-width="1"/></svg></button>
      <button aria-label="Dual lines"><svg class="faint" width="52" height="32" fill="none" stroke-width="1.500"><path d="M7 9l9-7 9 7 5-3 10 6 6-5" stroke="#f9a64a"/><path d="M7 18l9-3 9 9 5-3 10 5 6-7" stroke="#5085b0"/><path d="M1.500 0v32M49.500 0v32" stroke="#ddd" stroke-width="3" stroke-dasharray="1 3"/></svg></button>
      <button aria-label="Area chart"><svg class="faint" width="50" height="31"><path d="M0 14L12 0l20 13 18-5v3L32 21 12 8 0 15z" fill="#5085b0"/><path d="M0 15L12 8l20 13 18-10v8l-18 6-20-7-12 5z" fill="#f9a64a"/><path d="M0 23l12-5 20 7 18-6v12H0z" fill="#ffd9a8"/></svg></button>
      <button aria-label="Area charts"><svg class="faint" width="50" height="31"><path d="M0 14L6 0l9 13 9-5v2l-9 11L6 8l-6 7zM26 14l6-14 9 13 9-5v2l-9 11-9-13-6 7z" fill="#5085b0"/><path d="M0 15l6-7 9 13 9-11v9l-9 6-9-7-6 5zM26 15l6-7 9 13 9-11v9l-9 6-9-7-6 5z" fill="#f9a64a"/><path d="M0 23l6-5 9 7 9-6v12H0zM26 23l6-5 9 7 9-6v12H26z" fill="#ffd9a8"/></svg></button>
      <button aria-label="Dual combination"><svg class="faint" width="52" height="36" fill="none"><path d="M7 18h5v17H7zM15 13h5v22h-5zM23 22h5v13h-5zM31 4h5v31h-5zM39 17h5v18h-5z" fill="#5085b0"/><path d="M8 14l9-8 9 12 8-9 10 9" stroke="#f9a64a" stroke-width="1.500"/><path d="M1.500 0v34M49.500 0v34" stroke="#ddd" stroke-width="3" stroke-dasharray="1 3"/></svg></button>
      <button aria-label="Scatter plot"><svg class="faint" width="48" height="36" fill="none"><g stroke="#f9a64a" stroke-width="1.500"><circle cx="4" cy="31" r="3.500"/><circle cx="10" cy="19" r="3.500"/><circle cx="18" cy="9" r="3.500"/><circle cx="21" cy="23" r="3.500"/><circle cx="39" cy="11" r="3.500"/></g><path d="M13 24v9M8.500 28.500h9M27 11v9M22.500 15.500h9M31 0v9M26.500 4.500h9M42 17v9M37.500 21.500h9M31 23v9M26.500 27.500h9" stroke="#57ad89"/></svg></button>
      <button aria-label="Histogram"><svg class="faint" width="44" height="31" fill="#57ad89"><path d="M0 28h4v3H0zM5 23h4v8H5zM10 14h4v17h-4zM15 4h4v27h-4zM20 0h4v31h-4zM25 4h4v27h-4zM30 14h4v17h-4zM35 23h4v8h-4zM40 28h4v3h-4z"/></svg></button>
      <button aria-label="Box plot"><svg width="44" height="34"><path d="M1 13h7v6H1zM13 8h7v9h-7zM25 11h7v8h-7zM37 6h7v12h-7z" fill="#9ddcb6"/><path d="M1 17h7v8H1zM13 17h7v5h-7zM25 19h7v8h-7zM37 18h7v5h-7z" fill="#57ad89"/><path d="M4.500 5v23M16.500 3v27M28.500 2v29M40.500 0v32M2 5.500h5M2 28.500h5M14 3.500h5M14 30.500h5M26 2.500h5M26 31.500h5M38 .5h5M38 32.500h5" stroke="#222"/></svg></button>
      <button aria-label="Gantt chart"><svg class="faint" width="48" height="34"><path d="M0 0h9v8H0zM7 12h3v8H7zM14 12h4v8h-4zM0 25h2v8H0zM29 25h7v8h-7z" fill="#57ad89"/><path d="M0 12h6v8H0zM21 12h14v8H21zM19 25h4v8h-4z" fill="#9ddcb6"/><path d="M16 0h4v8h-4zM32 0h2v8h-2zM40 12h8v8h-8zM15 25h2v8h-2z" fill="#f28e2b"/><path d="M21 0h4v8h-4zM38 0h8v8h-8zM5 25h8v8H5zM42 25h4v8h-4z" fill="#ffbe7d"/></svg></button>
      <button aria-label="Bullet graph"><svg class="faint" width="48" height="32"><path d="M0 0h40v8H0zM0 12h20v8H0zM0 24h25v8H0z" fill="#e8e8e8"/><path d="M0 2h25v4H0zM0 14h40v4H0zM0 26h21v4H0z" fill="#57ad89"/><path d="M28.500 0v8M35.500 12v8M41.500 24v8" stroke="#333"/></svg></button>
      <button aria-label="Packed bubbles"><svg width="48" height="32"><circle cx="10" cy="22" r="9.500" fill="#9ddcb6"/><circle cx="30" cy="6.500" r="3.200" fill="#9ddcb6"/><circle cx="11" cy="8" r="3.500" fill="#57ad89"/><circle cx="20.500" cy="5.500" r="5" fill="#57ad89"/><circle cx="24.500" cy="27.500" r="4.200" fill="#57ad89"/><circle cx="25" cy="16.500" r="5.700" fill="#ffbe7d"/><circle cx="40" cy="11" r="6.700" fill="#ffbe7d"/><circle cx="34.500" cy="21.500" r="3.700" fill="#f28e2b"/></svg></button>
    </div>
    <div class="sm-hint">
      <p class="m-0" style="padding-bottom:11px">For <b>horizontal bars</b> try</p>
      <div class="d-flex align-items-center gap-1 mb-2 pb-1">0 or more <span class="pill dim">Dimensions</span></div>
      <div class="d-flex align-items-center gap-1">1 or more <span class="pill mea">Measures</span></div>
    </div>
  </div>
</aside>
</body>
</html>
